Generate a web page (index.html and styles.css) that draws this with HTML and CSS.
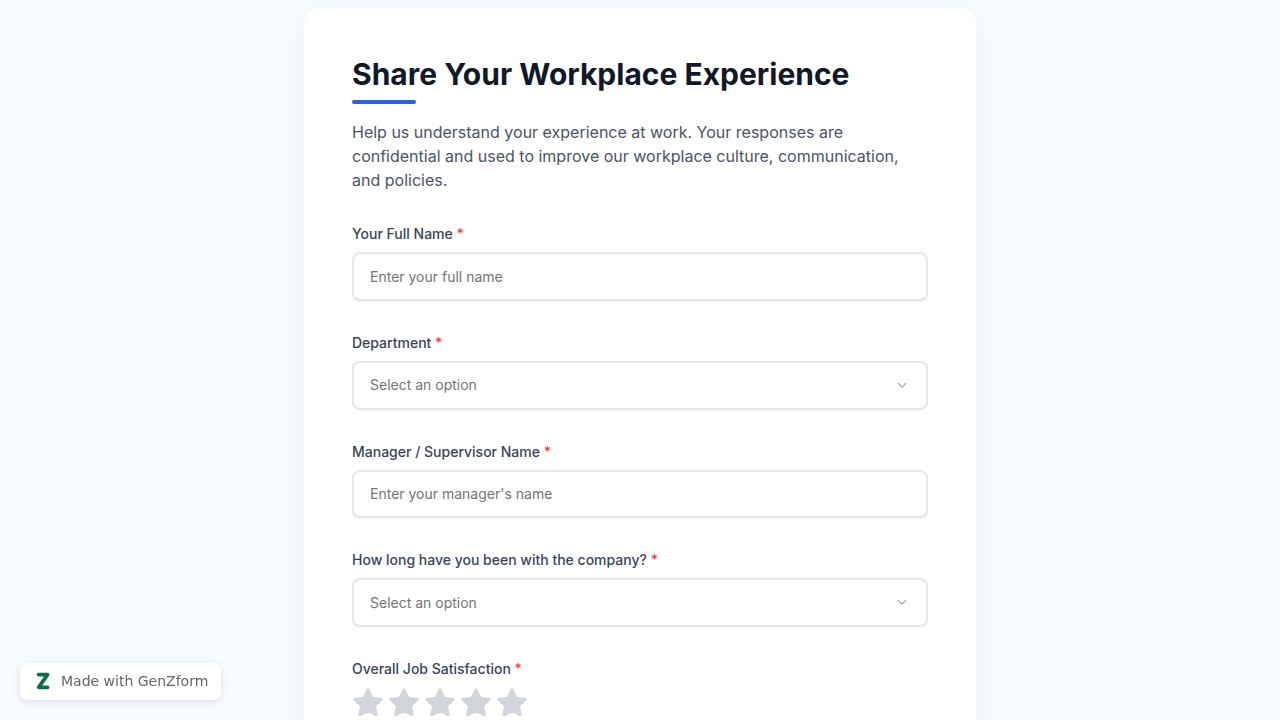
FILE: index.html
```html
<!DOCTYPE html>
<html lang="en">
<head>
    <meta charset="UTF-8">
    <meta name="viewport" content="width=device-width, initial-scale=1.0">
    <title>Share Your Workplace Experience</title>
    <link rel="stylesheet" href="styles.css">
</head>
<body>
    <main class="card">
        <h1>Share Your Workplace Experience</h1>
        <div class="title-bar"></div>
        <p class="intro">Help us understand your experience at work. Your responses are confidential and used to improve our workplace culture, communication, and policies.</p>

        <form>
            <div class="field">
                <label for="name">Your Full Name <span class="req">*</span></label>
                <input id="name" class="control" type="text" placeholder="Enter your full name">
            </div>
            <div class="field">
                <label>Department <span class="req">*</span></label>
                <div class="control select">
                    <span>Select an option</span>
                    <svg width="10" height="10" viewBox="0 0 24 24" fill="none" stroke="#a3a3a3" stroke-width="2.6" stroke-linecap="round" stroke-linejoin="round"><path d="M3 8l9 9 9-9"/></svg>
                </div>
            </div>
            <div class="field">
                <label for="manager">Manager / Supervisor Name <span class="req">*</span></label>
                <input id="manager" class="control" type="text" placeholder="Enter your manager's name">
            </div>
            <div class="field">
                <label>How long have you been with the company? <span class="req">*</span></label>
                <div class="control select">
                    <span>Select an option</span>
                    <svg width="10" height="10" viewBox="0 0 24 24" fill="none" stroke="#a3a3a3" stroke-width="2.6" stroke-linecap="round" stroke-linejoin="round"><path d="M3 8l9 9 9-9"/></svg>
                </div>
            </div>
            <div class="field">
                <label>Overall Job Satisfaction <span class="req">*</span></label>
                <div class="stars">
                    <svg width="32" height="32" viewBox="0 0 24 24" fill="#d1d5db" stroke="#d1d5db" stroke-width="2" stroke-linejoin="round"><path d="M12 2l3.09 6.26L22 9.27l-5 4.87 1.18 6.88L12 17.77l-6.18 3.25L7 14.14 2 9.27l6.91-1.01z"/></svg>
                    <svg width="32" height="32" viewBox="0 0 24 24" fill="#d1d5db" stroke="#d1d5db" stroke-width="2" stroke-linejoin="round"><path d="M12 2l3.09 6.26L22 9.27l-5 4.87 1.18 6.88L12 17.77l-6.18 3.25L7 14.14 2 9.27l6.91-1.01z"/></svg>
                    <svg width="32" height="32" viewBox="0 0 24 24" fill="#d1d5db" stroke="#d1d5db" stroke-width="2" stroke-linejoin="round"><path d="M12 2l3.09 6.26L22 9.27l-5 4.87 1.18 6.88L12 17.77l-6.18 3.25L7 14.14 2 9.27l6.91-1.01z"/></svg>
                    <svg width="32" height="32" viewBox="0 0 24 24" fill="#d1d5db" stroke="#d1d5db" stroke-width="2" stroke-linejoin="round"><path d="M12 2l3.09 6.26L22 9.27l-5 4.87 1.18 6.88L12 17.77l-6.18 3.25L7 14.14 2 9.27l6.91-1.01z"/></svg>
                    <svg width="32" height="32" viewBox="0 0 24 24" fill="#d1d5db" stroke="#d1d5db" stroke-width="2" stroke-linejoin="round"><path d="M12 2l3.09 6.26L22 9.27l-5 4.87 1.18 6.88L12 17.77l-6.18 3.25L7 14.14 2 9.27l6.91-1.01z"/></svg>
                </div>
            </div>
        </form>
    </main>

    <!-- Badge stays fixed over the page -->
    <a class="badge" href="#">
        <svg width="14" height="18" viewBox="0 0 14 18" fill="none" stroke="#0f6b4f" stroke-width="3.6" stroke-linecap="round" stroke-linejoin="round"><path d="M2.4 2.6h9.2L2.6 15.4h9"/></svg>
        <span>Made with GenZform</span>
    </a>
</body>
</html>
```

FILE: styles.css
```css
html, body {
    height: 720px;
    overflow: hidden;
}
body {
    margin: 0;
    padding: 8px 0;
    background-color: #f8fbff;
    font-family: Inter, sans-serif;
    color: #374151;
    box-sizing: border-box;
}
.card {
    width: 672px;
    margin: 0 auto;
    box-sizing: border-box;
    padding: 48px;
    min-height: 900px;
    background-color: #fff;
    border-radius: 16px;
    box-shadow: 0 4px 24px rgba(30, 64, 175, 0.06);
}
h1 {
    margin: 0;
    font-size: 30px;
    line-height: 36px;
    font-weight: 700;
    color: #111827;
}
.title-bar {
    width: 64px;
    height: 4px;
    margin-top: 8px;
    border-radius: 2px;
    background-color: #2563eb;
}
.intro {
    margin: 16px 0 32px;
    font-size: 16px;
    line-height: 24px;
    color: #4b5563;
}
.field {
    margin-bottom: 32px;
}
label {
    display: block;
    margin-bottom: 8px;
    font-size: 14px;
    line-height: 20px;
    font-weight: 500;
    color: #3b4557;
}
.req {
    color: #ef4444;
}
.control {
    display: block;
    width: 100%;
    height: 48.75px;
    box-sizing: border-box;
    padding: 0 16px;
    border: 2px solid #e5e7eb;
    border-radius: 8px;
    background-color: #fff;
    box-shadow: 0 1px 2px rgba(0, 0, 0, 0.05);
    font-family: Inter, sans-serif;
    font-size: 14px;
    color: #6b7280;
}
.control::placeholder {
    color: #757575;
    opacity: 1;
}
.select {
    display: flex;
    align-items: center;
    justify-content: space-between;
    padding-right: 19px;
    padding-bottom: 0.5px;
    color: #757575;
}
.stars {
    display: flex;
    gap: 4px;
}
.badge {
    position: fixed;
    left: 20px;
    bottom: 20px;
    display: flex;
    align-items: center;
    gap: 11px;
    height: 37px;
    box-sizing: border-box;
    padding: 0 13px 2px 16px;
    background-color: #fff;
    border-radius: 8px;
    box-shadow: 0 2px 8px rgba(0, 0, 0, 0.12);
    font-family: "DejaVu Sans", sans-serif;
    font-size: 14px;
    color: #666;
    text-decoration: none;
}
```
